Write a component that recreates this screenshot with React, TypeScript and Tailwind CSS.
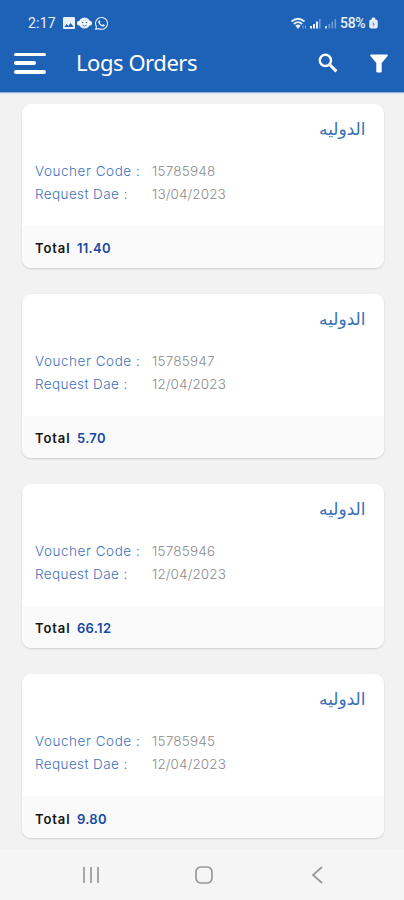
import { FaWhatsapp } from 'react-icons/fa'
import { MdImage } from 'react-icons/md'

type Order = {
  name: string
  voucher: string
  date: string
  total: string
}

const ORDERS: Order[] = [
  { name: 'الدوليه', voucher: '15785948', date: '13/04/2023', total: '11.40' },
  { name: 'الدوليه', voucher: '15785947', date: '12/04/2023', total: '5.70' },
  { name: 'الدوليه', voucher: '15785946', date: '12/04/2023', total: '66.12' },
  { name: 'الدوليه', voucher: '15785945', date: '12/04/2023', total: '9.80' },
]

function StatusBar() {
  return (
    <div className="flex h-[46px] items-center justify-between pl-[28px] pr-[26px] text-white/90">
      <div className="flex items-center">
        <span className="w-[33px] font-[Roboto] text-[14px] leading-4 tracking-[0.2px]">2:17</span>
        <MdImage className="size-[16px]" />
        <svg viewBox="0 0 15 14" className="h-[14px] w-[15px]" fill="currentColor">
          <circle cx="7.5" cy="7" r="5.6" />
          <rect x="0" y="5" width="15" height="4.6" rx="1.8" />
          <circle cx="5.5" cy="6.5" r="0.8" fill="#1d62b7" />
          <circle cx="9.5" cy="6.5" r="0.8" fill="#1d62b7" />
          <path d="M5.5 9.2q2 1.6 4 0" stroke="#1d62b7" strokeWidth="0.8" fill="none" />
        </svg>
        <FaWhatsapp className="ml-[2px] size-[15px]" />
      </div>
      <div className="flex items-center">
        <svg viewBox="0 0 16 13" className="h-[13px] w-[16px]" fill="none" stroke="currentColor">
          <path d="M0.5 4.5q6.5-5.5 13 0" strokeWidth="1.7" />
          <path d="M2.8 7q4.2-3.6 8.4 0" strokeWidth="1.7" />
          <path d="M4.3 8.6q2.7-2 5.4 0L7 12z" fill="currentColor" stroke="none" />
          <path d="M12 8.5v3M14.5 8.5v3" strokeWidth="1" opacity="0.5" />
        </svg>
        <svg viewBox="0 0 28 13" className="ml-[3px] h-[13px] w-[28px]" fill="currentColor">
          <rect x="0" y="9" width="2" height="2.5" />
          <rect x="3" y="7" width="2" height="4.5" />
          <rect x="6" y="4.5" width="2" height="7" />
          <rect x="9" y="2" width="1.6" height="9.5" opacity="0.4" />
          <rect x="15" y="9" width="2" height="2.5" opacity="0.8" />
          <rect x="18.5" y="7" width="1.6" height="4.5" opacity="0.4" />
          <rect x="21.5" y="4.5" width="1.6" height="7" opacity="0.4" />
          <rect x="24.5" y="2" width="1.6" height="9.5" opacity="0.4" />
        </svg>
        <span className="ml-[2px] w-[29px] whitespace-nowrap font-[Roboto] text-[14px] font-medium leading-4 tracking-[-0.3px]">58%</span>
        <svg viewBox="0 0 9 12" className="h-[12px] w-[9px]" fill="currentColor">
          <rect x="2.8" y="0.5" width="3.4" height="3" rx="1" />
          <rect x="0.3" y="2.6" width="8.4" height="9" rx="2" />
          <path d="M5.2 4.2 2.6 7.6h1.6l-.5 2.6 2.7-3.5H4.9z" fill="#1d62b7" opacity="0.5" />
        </svg>
      </div>
    </div>
  )
}

function Header() {
  return (
    <header className="h-[92px] bg-[#1d62b7] shadow-[0_1px_1px_rgba(29,98,183,0.45)]">
      <StatusBar />
      <div className="flex h-[34px] items-center pl-[14px] pr-[16px] text-white">
        <button className="flex h-[21px] w-[32px] flex-col justify-between" aria-label="Menu">
          <span className="h-[3.5px] w-[32px] rounded-full bg-white" />
          <span className="h-[3.5px] w-[22px] rounded-full bg-white" />
          <span className="h-[3.5px] w-[32px] rounded-full bg-white" />
        </button>
        <h1 className="ml-[30px] flex-1 whitespace-nowrap pb-[2px] font-['Noto_Sans'] text-[22px] leading-[30px] tracking-[-0.45px]">Logs Orders</h1>
        <button aria-label="Search">
          <svg viewBox="0 0 20 20" className="size-[20px]" fill="none" stroke="currentColor">
            <circle cx="7.4" cy="7.4" r="5.6" strokeWidth="2.4" />
            <path d="m11.8 11.8 6.6 6.6" strokeWidth="3" />
          </svg>
        </button>
        <button className="ml-[32px]" aria-label="Filter">
          <svg viewBox="0 0 18 19" className="h-[19px] w-[18px]" fill="currentColor">
            <path d="M1 .5h16a.8.8 0 0 1 .6 1.4L11.7 9v8.6a1 1 0 0 1-1 1H7.3a1 1 0 0 1-1-1V9L.4 1.9A.8.8 0 0 1 1 .5z" />
          </svg>
        </button>
      </div>
    </header>
  )
}

function OrderCard({ order }: { order: Order }) {
  return (
    <article className="h-[164px] overflow-hidden rounded-[9px] bg-white font-[Inter] shadow-[0_1px_2px_rgba(0,0,0,0.16)]">
      <div className="h-[122px] pl-[13px] pr-[18px] pt-[13px]">
        <p dir="rtl" className="h-[24px] font-['DejaVu_Sans'] text-[17px] leading-[24px] text-[#3971b8]">
          {order.name}
        </p>
        <dl className="mt-[19px] grid grid-cols-[117px_1fr] whitespace-nowrap text-[13.5px] font-light leading-[22.5px]">
          <dt className="tracking-[0.55px] text-[#3f73bd]">Voucher Code :</dt>
          <dd className="tracking-[0.2px] text-[#8c8c8c]">{order.voucher}</dd>
          <dt className="tracking-[0.4px] text-[#3f73bd]">Request Dae :</dt>
          <dd className="tracking-[0.1px] text-[#8c8c8c]">{order.date}</dd>
        </dl>
      </div>
      <div className="flex h-[42px] items-center bg-[#fafafa] pl-[13px] pt-[4px] text-[13px] font-semibold">
        <span className="w-[42px] tracking-[0.9px] text-[#161616]">Total</span>
        <span className="tracking-[0.3px] text-[#1649a5]">{order.total}</span>
      </div>
    </article>
  )
}

function NavBar() {
  return (
    <nav className="flex h-[51px] items-center bg-[#f5f5f5] pl-[81px] text-[#989898]">
      <svg viewBox="0 0 20 20" className="size-[20px]" stroke="currentColor" strokeWidth="1.7">
        <path d="M3 2v16M10 2v16M17 2v16" />
      </svg>
      <svg viewBox="0 0 20 20" className="ml-[93px] size-[20px]" fill="none" stroke="currentColor" strokeWidth="1.7">
        <rect x="2" y="2" width="16" height="16" rx="5" />
      </svg>
      <svg viewBox="0 0 20 20" className="ml-[94px] size-[20px]" fill="none" stroke="currentColor" strokeWidth="1.7">
        <path d="M14 2 5 10l9 8" />
      </svg>
    </nav>
  )
}

export default function App() {
  return (
    <div className="flex h-[900px] w-[404px] flex-col overflow-hidden bg-[#f2f2f2]">
      <Header />
      <main className="flex flex-1 flex-col gap-[26.1px] pl-[22px] pr-[20.5px] pt-[12px]">
        {ORDERS.map((order) => (
          <OrderCard key={order.voucher} order={order} />
        ))}
      </main>
      <NavBar />
    </div>
  )
}
